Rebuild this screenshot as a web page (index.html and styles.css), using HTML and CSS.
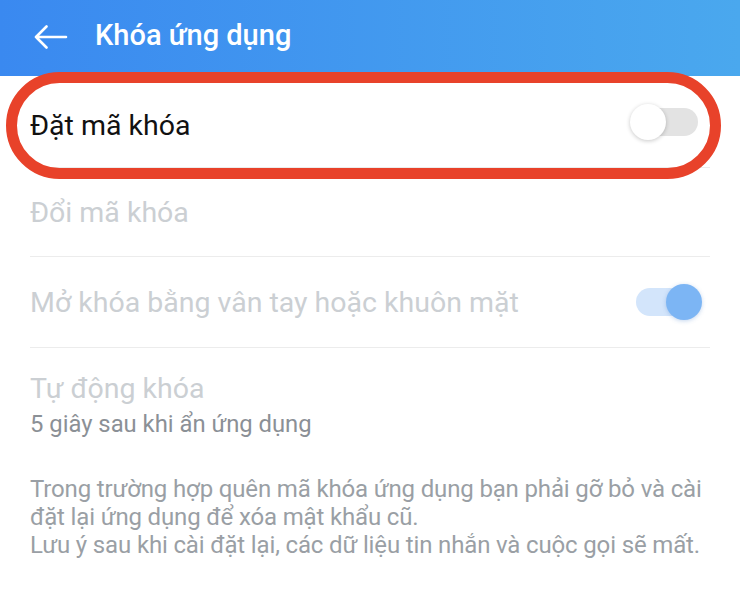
FILE: index.html
```html
<!DOCTYPE html>
<html lang="vi">
<head>
<meta charset="utf-8">
<link rel="stylesheet" href="styles.css">
</head>
<body>
<div class="screen">
  <header class="appbar">
    <svg class="back" width="34" height="24" viewBox="0 0 34 24" aria-hidden="true">
      <path d="M2 12 H32 M12.5 1.5 L2 12 L12.5 22.5" fill="none" stroke="#fff" stroke-width="2.6" stroke-linecap="round" stroke-linejoin="round"/>
    </svg>
    <h1 class="title">Khóa ứng dụng</h1>
  </header>
  <main class="list">
    <div class="row row-first">
      <span class="label label-active">Đặt mã khóa</span>
      <span class="switch switch-off"><span class="knob"></span></span>
    </div>
    <div class="row row-second">
      <span class="label">Đổi mã khóa</span>
    </div>
    <div class="row row-third">
      <span class="label">Mở khóa bằng vân tay hoặc khuôn mặt</span>
      <span class="switch switch-on"><span class="knob"></span></span>
    </div>
    <div class="row row-last">
      <div class="stack">
        <span class="label">Tự động khóa</span>
        <span class="sub">5 giây sau khi ẩn ứng dụng</span>
      </div>
    </div>
    <p class="note">Trong trường hợp quên mã khóa ứng dụng bạn phải gỡ bỏ và cài đặt lại ứng dụng để xóa mật khẩu cũ.<br>Lưu ý sau khi cài đặt lại, các dữ liệu tin nhắn và cuộc gọi sẽ mất.</p>
  </main>
  <div class="highlight"></div>
</div>
</body>
</html>
```

FILE: styles.css
```css
* { box-sizing: border-box; }
html, body { margin: 0; padding: 0; background: #fff; }
body { font-family: Roboto, "Noto Sans", sans-serif; width: 740px; height: 593px; overflow: hidden; }
.screen { position: relative; width: 740px; height: 593px; }
.appbar {
  height: 76px;
  display: flex;
  align-items: center;
  padding-left: 34px;
  padding-bottom: 6px;
  gap: 27px;
  background: linear-gradient(90deg, #3a89f0 0%, #4aa8ee 100%);
}
.back { display: block; margin-top: 3px; }
.title {
  margin: 0;
  color: #fff;
  font-size: 29px;
  font-weight: 500;
}
.list { padding: 0 30px; }
.row {
  display: flex;
  align-items: center;
  justify-content: space-between;
  border-bottom: 1px solid #ececec;
}
.row-first { height: 92px; padding-top: 8px; }
.row-first .switch { margin-top: -8px; }
.row-second { height: 89px; }
.row-third { height: 91px; }
.row-last { border-bottom: none; align-items: flex-start; padding-top: 24px; }
.label { font-size: 28.5px; color: #cbcfd3; line-height: 33px; }
.label-active { color: #111; }
.stack { display: flex; flex-direction: column; gap: 6px; }
.sub { font-size: 23.8px; line-height: 27px; color: #8b9096; }
.switch { position: relative; display: block; width: 52px; height: 28px; border-radius: 14px; }
.switch .knob { position: absolute; top: -4px; width: 36px; height: 36px; border-radius: 50%; }
.switch-off { background: #e3e3e3; margin-right: 12px; }
.switch-off .knob { left: -16px; background: #fff; box-shadow: 0 1px 4px rgba(0,0,0,0.22); }
.switch-on { background: #d3e5fb; width: 56px; margin-right: 18px; }
.switch-on .knob { left: 30px; background: #7cb5f4; box-shadow: 0 1px 4px rgba(60,120,200,0.3); }
.note {
  margin: 37px 0 0;
  font-size: 24px;
  line-height: 28px;
  color: #9a9fa5;
  letter-spacing: -0.15px;
}
.highlight {
  position: absolute;
  left: 6px;
  top: 72px;
  width: 715px;
  height: 107px;
  border: 11px solid #e8422a;
  border-radius: 54px;
  pointer-events: none;
}
```
